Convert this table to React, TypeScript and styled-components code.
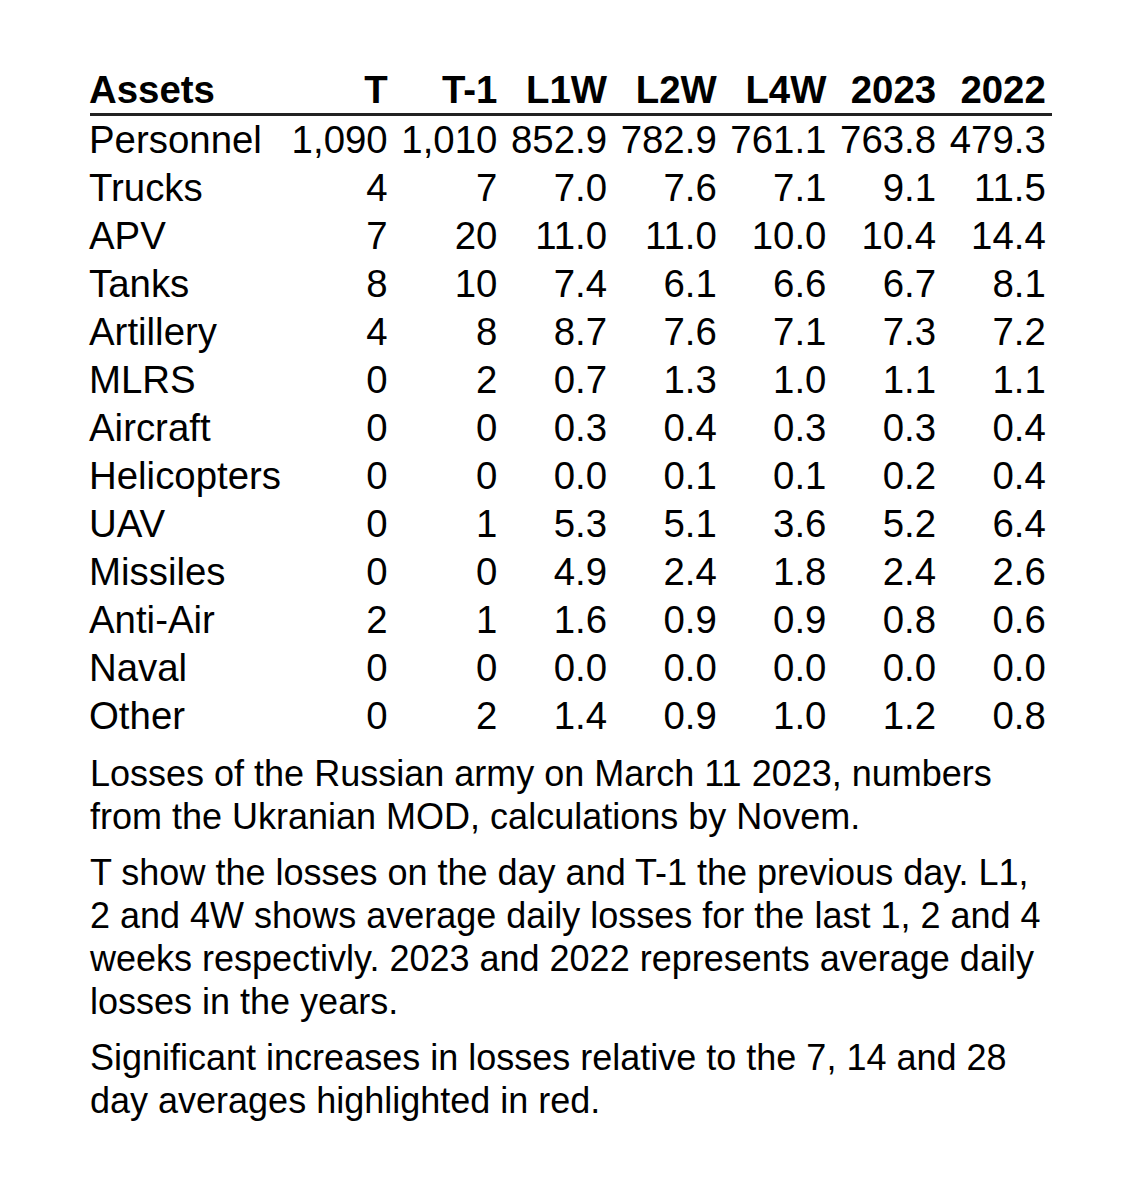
import React, { FC } from "react";
import styled, { createGlobalStyle } from "styled-components";

const GlobalStyle = createGlobalStyle`
  html, body {
    margin: 0;
    padding: 0;
    background: #ffffff;
  }
  body {
    font-family: "Liberation Sans", Arial, sans-serif;
    color: #000000;
  }
`;

type Row = {
  asset: string;
  values: string[];
};

const columns = ["T", "T-1", "L1W", "L2W", "L4W", "2023", "2022"];

const rows: Row[] = [
  { asset: "Personnel", values: ["1,090", "1,010", "852.9", "782.9", "761.1", "763.8", "479.3"] },
  { asset: "Trucks", values: ["4", "7", "7.0", "7.6", "7.1", "9.1", "11.5"] },
  { asset: "APV", values: ["7", "20", "11.0", "11.0", "10.0", "10.4", "14.4"] },
  { asset: "Tanks", values: ["8", "10", "7.4", "6.1", "6.6", "6.7", "8.1"] },
  { asset: "Artillery", values: ["4", "8", "8.7", "7.6", "7.1", "7.3", "7.2"] },
  { asset: "MLRS", values: ["0", "2", "0.7", "1.3", "1.0", "1.1", "1.1"] },
  { asset: "Aircraft", values: ["0", "0", "0.3", "0.4", "0.3", "0.3", "0.4"] },
  { asset: "Helicopters", values: ["0", "0", "0.0", "0.1", "0.1", "0.2", "0.4"] },
  { asset: "UAV", values: ["0", "1", "5.3", "5.1", "3.6", "5.2", "6.4"] },
  { asset: "Missiles", values: ["0", "0", "4.9", "2.4", "1.8", "2.4", "2.6"] },
  { asset: "Anti-Air", values: ["2", "1", "1.6", "0.9", "0.9", "0.8", "0.6"] },
  { asset: "Naval", values: ["0", "0", "0.0", "0.0", "0.0", "0.0", "0.0"] },
  { asset: "Other", values: ["0", "2", "1.4", "0.9", "1.0", "1.2", "0.8"] },
];

const App: FC = () => {
  return (
    <Page>
      <GlobalStyle />
      <Report>
        <Table>
          <HeaderRow>
            <HeadCell>Assets</HeadCell>
            {columns.map((c) => (
              <HeadCell key={c} numeric>
                {c}
              </HeadCell>
            ))}
          </HeaderRow>
          {rows.map((row) => (
            <BodyRow key={row.asset}>
              <Cell>{row.asset}</Cell>
              {row.values.map((v, i) => (
                <Cell key={columns[i]} numeric>
                  {v}
                </Cell>
              ))}
            </BodyRow>
          ))}
        </Table>
        <Notes>
          <Note>
            Losses of the Russian army on March 11 2023, numbers
            <br />
            from the Ukranian MOD, calculations by Novem.
          </Note>
          <Note>
            T show the losses on the day and T-1 the previous day. L1,
            <br />
            2 and 4W shows average daily losses for the last 1, 2 and 4
            <br />
            weeks respectivly. 2023 and 2022 represents average daily
            <br />
            losses in the years.
          </Note>
          <Note>
            Significant increases in losses relative to the 7, 14 and 28
            <br />
            day averages highlighted in red.
          </Note>
        </Notes>
      </Report>
    </Page>
  );
};

const Page = styled.div`
  padding: 66px 0 0 90px;
  min-height: 1182px;
  box-sizing: border-box;
`;

const Report = styled.div`
  display: flex;
  flex-direction: column;
  gap: 12px;
  width: 962px;
`;

const Table = styled.div`
  display: flex;
  flex-direction: column;
`;

const gridColumns = `194px repeat(7, 109.7px)`;

const HeaderRow = styled.div`
  display: grid;
  grid-template-columns: ${gridColumns};
  height: 47px;
  border-bottom: 3px solid #222222;
  font-weight: 700;
`;

const BodyRow = styled.div`
  display: grid;
  grid-template-columns: ${gridColumns};
  height: 48px;
`;

const Cell = styled.div<{ numeric?: boolean }>`
  font-size: 38.4px;
  line-height: 48px;
  white-space: nowrap;
  text-align: ${(p) => (p.numeric ? "right" : "left")};
  padding-right: ${(p) => (p.numeric ? "6px" : "0")};
  margin-left: ${(p) => (p.numeric ? "0" : "-1px")};
`;

const HeadCell = styled(Cell)`
  font-weight: 700;
  line-height: 47px;
`;

const Notes = styled.div`
  display: flex;
  flex-direction: column;
  gap: 13px;
  width: 1000px;
`;

const Note = styled.p`
  margin: 0;
  font-size: 36px;
  line-height: 43px;
`;

export default App;
